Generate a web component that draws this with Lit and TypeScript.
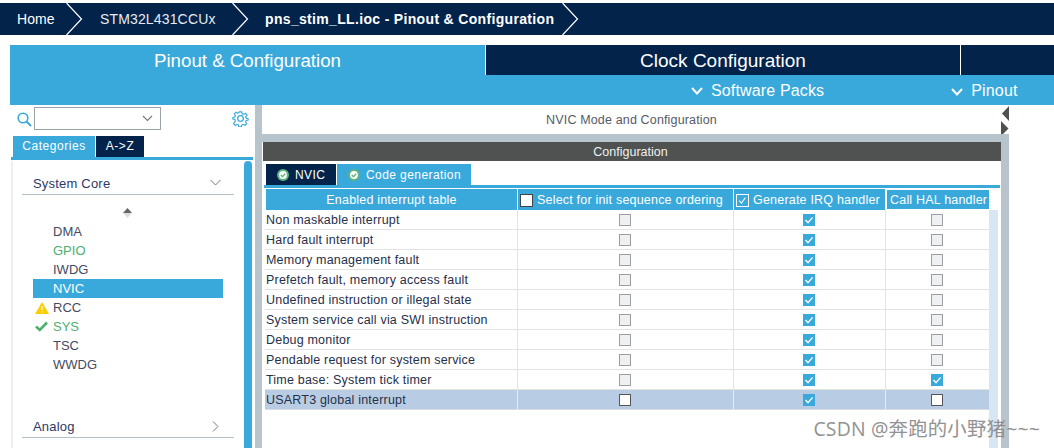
import { LitElement, html, css, svg } from "lit";
import { customElement } from "lit/decorators.js";

const rows: [string, number, number, number][] = [
  ["Non maskable interrupt", 0, 1, 0],
  ["Hard fault interrupt", 0, 1, 0],
  ["Memory management fault", 0, 1, 0],
  ["Prefetch fault, memory access fault", 0, 1, 0],
  ["Undefined instruction or illegal state", 0, 1, 0],
  ["System service call via SWI instruction", 0, 1, 0],
  ["Debug monitor", 0, 1, 0],
  ["Pendable request for system service", 0, 1, 0],
  ["Time base: System tick timer", 0, 1, 1],
  ["USART3 global interrupt", 0, 1, 0],
];

const crumbChevron = html`<svg class="crumb-chev" width="17" height="32" viewBox="0 0 17 32"><path d="M0.5 0 L15.5 16 L0.5 32" fill="none" stroke="#fff" stroke-width="1.2"/></svg>`;
const barChevron = html`<svg class="bar-chev" width="12" height="8" viewBox="0 0 12 8"><path d="M1 1 L6 6.5 L11 1" fill="none" stroke="#fff" stroke-width="2"/></svg>`;
const check = svg`<path d="M2.5 6 L5 8.7 L9.6 3.4" fill="none" stroke="#fff" stroke-width="1.4"/>`;
const tabIcon = html`<svg class="tab-icon" width="12" height="12" viewBox="0 0 12 12"><circle cx="6" cy="6" r="6" fill="#5db47f"/><circle cx="6" cy="6" r="3.9" fill="#fff"/><path d="M3.8 6 L5.5 7.7 L8.3 4.6" fill="none" stroke="#5db47f" stroke-width="1.4"/></svg>`;

@customElement("app-root")
export class AppRoot extends LitElement {
  static styles = css`
    :host { display: block; width: 1054px; height: 448px; position: relative; overflow: hidden; background: #fff;
      font-family: "Liberation Sans", Arial, sans-serif; font-size: 12.5px; }
    .crumbs { margin-top: 3px; height: 32px; background: #03234b; display: flex; align-items: center; color: #fff; font-size: 14px; }
    .crumb-home { margin-left: 17px; width: 49px; letter-spacing: 0.1px; }
    .crumb-mcu { margin-left: 17px; width: 131.5px; color: #e8ebf0; letter-spacing: 0.15px; }
    .crumb-file { margin-left: 16.5px; width: 297px; font-weight: 700; letter-spacing: 0.33px; white-space: nowrap; }
    .nav { margin: 10px 0 0 10px; display: grid; grid-template-columns: 475px 475px 1fr; grid-template-rows: 30px 30px; background: #39a9dc; color: #fff; }
    .nav-pin { grid-row: 1 / span 2; font-size: 18.7px; text-align: center; padding-top: 5px; }
    .nav-clock { background: #03234b; border-left: 1px solid #fff; font-size: 19px; text-align: center; line-height: 32px; box-sizing: border-box; }
    .nav-rest { background: #03234b; border-left: 1px solid #fff; }
    .nav-tools { grid-column: 2 / span 2; display: flex; align-items: center; font-size: 16px; padding: 1px 0 0 206px; letter-spacing: 0.15px; }
    .nav-tools span { margin-left: 8px; }
    .nav-tools .pin-tool { margin-left: 127px; }
    .main { display: flex; height: 343px; }
    .left { margin-left: 10px; width: 245px; display: flex; flex-direction: column; background: #fff; }
    .search { height: 31px; display: flex; align-items: flex-start; box-sizing: border-box; padding: 2px 0 0 7px; }
    .search-ico { margin-top: 5px; }
    .combo { margin-left: 2px; width: 127px; height: 23px; box-sizing: border-box; border: 1px solid #9aa3a8; background: #fff; display: flex; align-items: center; justify-content: flex-end; padding-right: 7px; }
    .gear { margin: 3px 0 0 71px; }
    .cat-tabs { display: flex; height: 21px; margin-left: 3px; color: #fff; gap: 1px; font-size: 12px; letter-spacing: 0.55px; line-height: 21px; text-align: center; }
    .cat-a { width: 82px; background: #39a9dc; }
    .cat-b { width: 48px; background: #03234b; }
    .cat-line { height: 3px; width: 242px; margin-left: 1px; background: #39a9dc; }
    .cat-body { flex: 1; display: flex; margin-left: 1px; width: 242px; border-left: 2px solid #f0f0f0; box-sizing: border-box; min-height: 0; margin-top: 1px; }
    .cat-list { width: 231px; padding-left: 9px; box-sizing: border-box; color: #454b5f; }
    .sec { width: 212px; height: 34px; box-sizing: border-box; border-bottom: 1px solid #b5bfc8; display: flex; justify-content: space-between; align-items: center; color: #2d3a68; padding: 12px 13px 0 11px; font-size: 13px; letter-spacing: 0.2px; }
    .sec svg { margin-top: -3px; }
    .sec-analog svg { margin-right: 2px; margin-top: -1px; }
    .sort { display: block; margin: 13px 0 4px 101px; }
    .item { width: 190px; height: 19px; margin-left: 11px; display: flex; align-items: center; font-size: 13px; }
    .slot { width: 20px; display: flex; padding-left: 2px; box-sizing: border-box; }
    .ok { color: #4cb070; }
    .sel { background: #39a9dc; color: #fff; }
    .sec-analog { margin-top: 30px; }
    .scroll { width: 8px; background: #39a9dc; border-radius: 4px 4px 0 0; }
    .split { width: 7px; background: #b8c4cc; }
    .right { width: 739px; display: flex; flex-direction: column; }
    .title { height: 29px; line-height: 30px; text-align: center; color: #555a66; letter-spacing: 0.15px; }
    .strip { height: 8px; background: #b8c4cc; }
    .cfg { height: 19px; margin-left: 1px; background: #505251; color: #eef0f0; text-align: center; line-height: 20px; padding-right: 3px; }
    .tabs { display: flex; gap: 1px; margin: 3px 0 0 4px; height: 21px; color: #fff; font-size: 12px; }
    .tab { display: flex; align-items: center; letter-spacing: 0.42px; }
    .tab-nvic { width: 70px; background: #03234b; padding-left: 11px; box-sizing: border-box; }
    .tab-code { width: 134px; background: #39a9dc; padding-left: 11px; box-sizing: border-box; }
    .tab-icon { margin-right: 6px; }
    .tab-line { height: 3px; width: 736px; margin-left: 2px; background: #39a9dc; }
    .body { flex: 1; display: flex; min-height: 0; margin-top: 1px; margin-left: 3px; }
    .table { width: 724px; display: grid; grid-template-columns: 253px 216px 152px 103px; grid-template-rows: 21px; grid-auto-rows: 20px; align-content: start; color: #262f4a; letter-spacing: 0.2px; }
    .th { background: #39a9dc; color: #fff; display: flex; align-items: center; letter-spacing: 0.2px; border-right: 1px solid #fff; height: 21px; box-sizing: border-box; padding-top: 1px; white-space: nowrap; }
    .th.c { justify-content: center; margin-left: 1px; }
    .th-last { margin: 1px 0 1px 1px; height: 19px; border-right: 0; padding: 0 0 0 3px; width: 102px; }
    .td { border-bottom: 1px solid #e3e3e3; border-right: 1px solid #e3e3e3; box-sizing: border-box; display: flex; align-items: center; justify-content: center; height: 20px; padding-right: 1px; }
    .td.last { border-right: 0; padding-right: 2px; }
    .name { justify-content: flex-start; padding: 0 0 0 1px; white-space: nowrap; }
    .hl { background: #b8cde3; border-right-color: #e4ecf4; border-bottom-color: #d7dee6; }
    .box { width: 12px; height: 12px; box-sizing: border-box; display: block; }
    .dis { background: #eff0f2; border: 1px solid #9b9fa4; }
    .on { background: #39a9dc; }
    .act { background: #fff; border: 1px solid #555; }
    .hbox { width: 13px; height: 13px; box-sizing: border-box; margin: 0 4px 0 2px; flex: none; }
    .hbox-plain { background: #fff; border: 1px solid #444; }
    .hbox-on { border: 1px solid #fff; }
    .track { width: 9px; margin-top: 21px; background: #d8e6f3; }
    .arrows { width: 8px; display: flex; flex-direction: column; }
    .arrow-pad { height: 29px; background: #fff; }
    .arrows .rest { flex: 1; background: #b8c4cc; }
    .mark { position: absolute; right: 14px; bottom: 6px; color: #8d8d8d; font-size: 19.4px; font-family: "Open Sans", "Noto Sans CJK SC", sans-serif; white-space: nowrap; letter-spacing: 0.2px; opacity: .95; }
  `;

  private box(v: number, hl: boolean) {
    if (v) return html`<svg class="box on" viewBox="0 0 12 12">${check}</svg>`;
    return html`<span class="box ${hl ? "act" : "dis"}"></span>`;
  }

  render() {
    return html`
      <div class="crumbs">
        <span class="crumb-home">Home</span>${crumbChevron}
        <span class="crumb-mcu">STM32L431CCUx</span>${crumbChevron}
        <span class="crumb-file">pns_stim_LL.ioc - Pinout &amp; Configuration</span>${crumbChevron}
      </div>
      <div class="nav">
        <div class="nav-pin">Pinout &amp; Configuration</div>
        <div class="nav-clock">Clock Configuration</div>
        <div class="nav-rest"></div>
        <div class="nav-tools">${barChevron}<span>Software Packs</span>
          <span class="pin-tool">${barChevron}</span><span>Pinout</span></div>
      </div>
      <div class="main">
        <div class="left">
          <div class="search">
            <svg class="search-ico" width="15" height="15" viewBox="0 0 15 15"><circle cx="6" cy="6" r="4.8" fill="none" stroke="#39a9dc" stroke-width="1.6"/><path d="M9.5 9.5 L14 14" stroke="#39a9dc" stroke-width="1.8"/></svg>
            <div class="combo"><svg width="11" height="7" viewBox="0 0 11 7"><path d="M1 1 L5.5 5.5 L10 1" fill="none" stroke="#777" stroke-width="1.1"/></svg></div>
            <svg class="gear" width="17" height="17" viewBox="0 0 24 24"><path d="M10 2h4l.6 3 2.3 1 2.6-1.7 2.8 2.8L20 9.7l1 2.3 3 .6v2.400l-3 .6-1 2.3 1.700 2.600-2.800 2.800-2.600-1.700-2.300 1-.6 3h-4l-.6-3-2.300-1-2.600 1.700-2.800-2.800L4 16.100l-1-2.300-3-.6v-2.400l3-.6 1-2.300-1.700-2.600 2.800-2.800L7.100 4.200l2.300-1z" transform="translate(1.200 .8) scale(.9)" fill="none" stroke="#39a9dc" stroke-width="1.800"/><circle cx="12" cy="12" r="4" fill="none" stroke="#39a9dc" stroke-width="1.800"/></svg>
          </div>
          <div class="cat-tabs"><div class="cat-a">Categories</div><div class="cat-b">A-&gt;Z</div></div>
          <div class="cat-line"></div>
          <div class="cat-body">
            <div class="cat-list">
              <div class="sec"><span>System Core</span><svg width="11" height="7" viewBox="0 0 11 7"><path d="M.5 1 L5.500 6 L10.500 1" fill="none" stroke="#777" stroke-width="1"/></svg></div>
              <svg class="sort" width="9" height="10" viewBox="0 0 9 10"><path d="M4.500 0 L9 5 H0z" fill="#666"/><path d="M4.500 10 L9 5 H0z" fill="#ddd"/></svg>
              <div class="item"><span class="slot"></span>DMA</div>
              <div class="item ok"><span class="slot"></span>GPIO</div>
              <div class="item"><span class="slot"></span>IWDG</div>
              <div class="item sel"><span class="slot"></span>NVIC</div>
              <div class="item"><span class="slot"><svg width="14" height="12" viewBox="0 0 14 12"><path d="M7 0 L14 12 H0z" fill="#ffcc00"/><path d="M7 4 V8 M7 9.200 V10.600" stroke="#fff" stroke-width="1.200"/></svg></span>RCC</div>
              <div class="item ok"><span class="slot"><svg width="13" height="11" viewBox="0 0 13 11"><path d="M1 5.500 L4.800 9 L12 1.500" fill="none" stroke="#4cb070" stroke-width="2.600"/></svg></span>SYS</div>
              <div class="item"><span class="slot"></span>TSC</div>
              <div class="item"><span class="slot"></span>WWDG</div>
              <div class="sec sec-analog"><span>Analog</span><svg width="7" height="11" viewBox="0 0 7 11"><path d="M1 .5 L6 5.500 L1 10.500" fill="none" stroke="#777" stroke-width="1"/></svg></div>
            </div>
            <div class="scroll"></div>
          </div>
        </div>
        <div class="split"></div>
        <div class="right">
          <div class="title">NVIC Mode and Configuration</div>
          <div class="strip"></div>
          <div class="cfg">Configuration</div>
          <div class="tabs">
            <div class="tab tab-nvic">${tabIcon}NVIC</div>
            <div class="tab tab-code">${tabIcon}Code generation</div>
          </div>
          <div class="tab-line"></div>
          <div class="body">
            <div class="table">
              <div class="th c">Enabled interrupt table</div>
              <div class="th"><span class="hbox hbox-plain"></span>Select for init sequence ordering</div>
              <div class="th"><svg class="hbox hbox-on" viewBox="0 0 13 13"><path d="M2.500 6.500 L5.200 9.500 L10 3" fill="none" stroke="#fff" stroke-width="1.300"/></svg>Generate IRQ handler</div>
              <div class="th th-last">Call HAL handler</div>
              ${rows.map((r, i) => {
                const hl = i === rows.length - 1;
                const c = hl ? "hl" : "";
                return html`
                  <div class="td name ${c}">${r[0]}</div>
                  <div class="td ${c}">${this.box(r[1], hl)}</div>
                  <div class="td ${c}">${this.box(r[2], hl)}</div>
                  <div class="td last ${c}">${this.box(r[3], hl)}</div>`;
              })}
            </div>
            <div class="track"></div>
          </div>
        </div>
        <div class="arrows">
          <div class="arrow-pad"><svg width="8" height="31" viewBox="0 0 8 31"><path d="M8 1 V16 L1 8.500z M0 16 V31 L7.500 23.500z" fill="#505251"/></svg></div>
          <div class="rest"></div>
        </div>
      </div>
      <div class="mark">CSDN @奔跑的小野猪~~~</div>
    `;
  }
}
